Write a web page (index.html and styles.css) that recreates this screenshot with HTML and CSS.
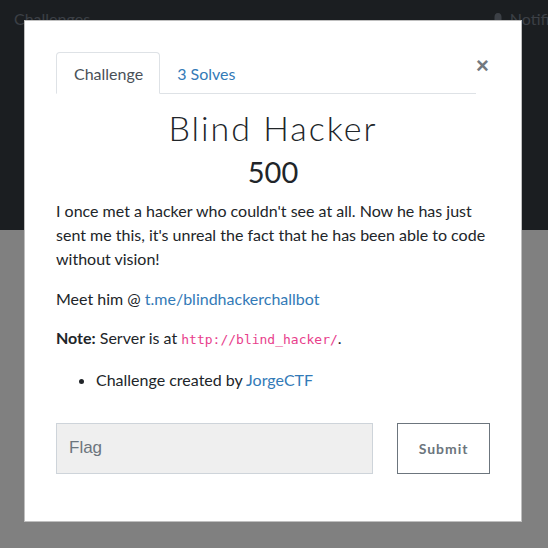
FILE: index.html
```html
<!DOCTYPE html>
<html>
<head>
<meta charset="utf-8">
<link rel="stylesheet" href="styles.css">
</head>
<body>
<div class="page">
  <div class="jumbo">
    <div class="navbar">
      <span class="nav-brand">Challenges</span>
      <span class="nav-right">
        <svg class="bell" viewBox="0 0 12 14" width="12" height="14"><path d="M6 1 C3.5 1 2.5 3 2.5 5 L2.5 8.5 L1 10.5 L11 10.5 L9.5 8.5 L9.5 5 C9.5 3 8.5 1 6 1 Z M4.5 11.5 A1.5 1.5 0 0 0 7.5 11.5 Z" fill="#3c4046"/></svg>
        <span>Notifications</span>
      </span>
    </div>
  </div>
  <div class="lower"></div>
</div>

<div class="modal">
  <div class="modal-body">
    <div class="tabs-row">
      <ul class="nav-tabs">
        <li class="tab active">Challenge</li>
        <li class="tab"><a href="#">3 Solves</a></li>
      </ul>
      <span class="close">&times;</span>
    </div>
    <h2 class="title">Blind Hacker</h2>
    <h3 class="value">500</h3>
    <div class="desc">
      <p>I once met a hacker who couldn't see at all. Now he has just sent me this, it's unreal the fact that he has been able to code without vision!</p>
      <p>Meet him @ <a href="#">t.me/blindhackerchallbot</a></p>
      <p><strong>Note:</strong> Server is at <code>http://blind_hacker/</code>.</p>
      <ul class="meta">
        <li>Challenge created by <a href="#">JorgeCTF</a></li>
      </ul>
    </div>
    <div class="form-row">
      <input class="flag" type="text" placeholder="Flag">
      <button class="submit">Submit</button>
    </div>
  </div>
</div>
</body>
</html>
```

FILE: styles.css
```css
html, body {
  margin: 0;
  padding: 0;
}
body {
  width: 548px;
  height: 548px;
  overflow: hidden;
  position: relative;
  font-family: "Lato", "Liberation Sans", sans-serif;
  background: #808080;
}
.page {
  display: flex;
  flex-direction: column;
  height: 548px;
}
.jumbo {
  height: 230px;
  background: #1b1e21;
}
.lower {
  flex: 1;
  background: #808080;
}
.navbar {
  display: flex;
  justify-content: space-between;
  align-items: center;
  padding: 9px 0 0 14px;
  font-size: 16px;
  color: #3c4046;
}
.nav-right {
  display: flex;
  align-items: center;
  gap: 6px;
  margin-right: -52px;
}
.modal {
  position: absolute;
  left: 24px;
  top: 20px;
  width: 496px;
  height: 500px;
  background: #fff;
  border: 1px solid rgba(0,0,0,0.25);
}
.modal-body {
  padding: 31px 31px 0 31px;
  color: #212529;
}
.tabs-row {
  display: flex;
  align-items: flex-start;
}
.nav-tabs {
  list-style: none;
  margin: 0;
  padding: 0;
  display: flex;
  flex-shrink: 0;
  width: 420px;
  border-bottom: 1px solid #dee2e6;
}
.tab {
  padding: 0 16px;
  height: 40px;
  line-height: 42px;
  font-size: 16px;
  margin-bottom: -1px;
  border: 1px solid transparent;
  border-radius: 4px 4px 0 0;
}
.tab.active {
  color: #495057;
  border-color: #dee2e6 #dee2e6 #fff;
  background: #fff;
  padding: 0 16px 0 17px;
}
.tab a {
  color: #337ab7;
  text-decoration: none;
}
.close {
  margin-left: auto;
  margin-right: 2px;
  margin-top: 2px;
  font-size: 22px;
  line-height: 24px;
  font-weight: 700;
  color: #737a80;
  font-family: "Liberation Sans", sans-serif;
}
.title {
  margin: 14px 0 0 0;
  text-align: center;
  font-family: "Lato", sans-serif;
  font-weight: 300;
  font-size: 34px;
  letter-spacing: 2px;
  line-height: 40px;
  color: #212529;
}
.value {
  margin: 6px 0 0 0;
  text-align: center;
  font-weight: 400;
  font-size: 29px;
  line-height: 36px;
  color: #212529;
}
.desc {
  margin-top: 9px;
  font-size: 16px;
  line-height: 24px;
}
.desc p {
  margin: 0 0 15.5px 0;
}
.desc a {
  color: #337ab7;
  text-decoration: none;
}
code {
  font-family: "DejaVu Sans Mono", monospace;
  font-size: 13px;
  color: #e83e8c;
}
.meta {
  margin: 0;
  padding-left: 40px;
}
.form-row {
  display: flex;
  gap: 24px;
  margin-top: 31px;
}
.flag {
  box-sizing: border-box;
  width: 318px;
  height: 51px;
  border: 1px solid #ced4da;
  background: #efefef;
  padding: 0 12px;
  font-family: "Liberation Sans", sans-serif;
  font-size: 17px;
  color: #495057;
  outline: none;
}
.flag::placeholder {
  color: #6c757d;
}
.submit {
  box-sizing: border-box;
  width: 93px;
  height: 51px;
  border: 1px solid #6c757d;
  background: #fff;
  color: #6c757d;
  font-family: "Lato", sans-serif;
  font-weight: 700;
  font-size: 14px;
  letter-spacing: 1px;
  padding: 0;
}
```
